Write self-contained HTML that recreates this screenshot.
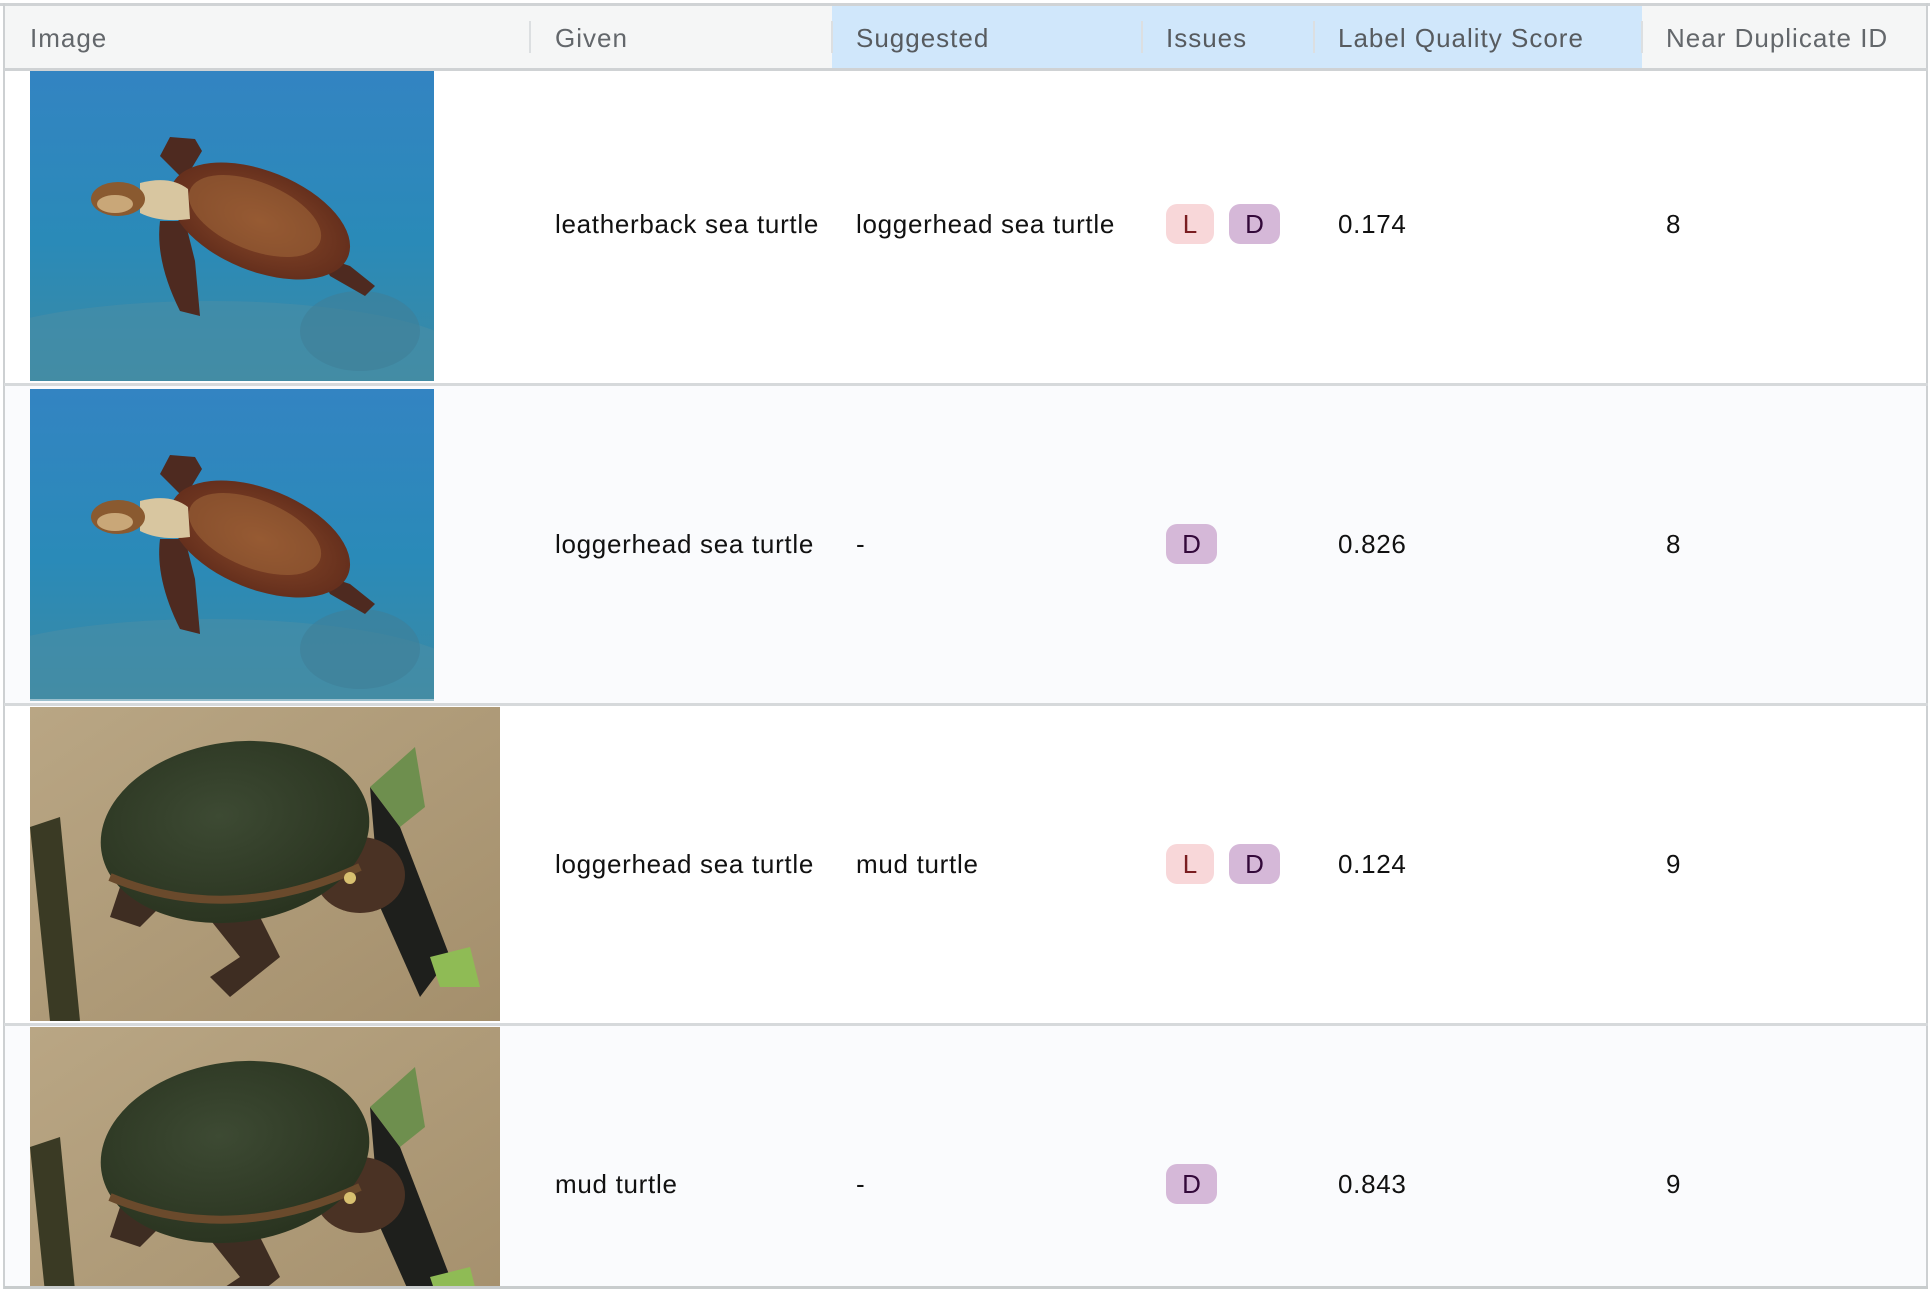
<!DOCTYPE html>
<html><head><meta charset="utf-8"><style>
*{margin:0;padding:0;box-sizing:border-box}
body{width:1930px;height:1292px;background:#fff;position:relative;overflow:hidden;font-family:"Liberation Sans",sans-serif;color:#111}
.a{position:absolute}
.h{position:absolute;top:22px;font-size:26px;color:#63676b;line-height:32px;letter-spacing:1px}
.dv{position:absolute;top:21px;width:2px;height:32px;background:#dcdfe1}
.t{position:absolute;font-size:26px;line-height:32px;color:#111;letter-spacing:0.7px}
.b{position:absolute;width:48px;height:40px;border-radius:11px;font-size:26px;line-height:40px;text-align:center}
.L{background:#f8d7d9;color:#7a1e22}
.D{background:#d5b8d8;color:#33093a;width:51px}
.hr{position:absolute;left:4px;width:1924px;height:3px;background:#d6d9db}
</style></head><body>
<svg width="0" height="0" style="position:absolute">
<defs>
<linearGradient id="sea" x1="0" y1="0" x2="0" y2="1"><stop offset="0" stop-color="#3384c2"/><stop offset="0.55" stop-color="#2a8ab8"/><stop offset="1" stop-color="#3b89a3"/></linearGradient>
<linearGradient id="sand" x1="0" y1="0" x2="1" y2="1"><stop offset="0" stop-color="#b9a684"/><stop offset="1" stop-color="#a48f6c"/></linearGradient>
<radialGradient id="shell" cx="0.45" cy="0.4" r="0.6"><stop offset="0" stop-color="#3d4a33"/><stop offset="1" stop-color="#2a3420"/></radialGradient>
<radialGradient id="tsh" cx="0.5" cy="0.5" r="0.6"><stop offset="0" stop-color="#8a4a2a"/><stop offset="1" stop-color="#5e2a1a"/></radialGradient>
<symbol id="seaT" viewBox="0 0 404 310">
<rect width="404" height="310" fill="url(#sea)"/>
<ellipse cx="180" cy="290" rx="260" ry="60" fill="#4a8ea6" opacity="0.55"/>
<ellipse cx="330" cy="260" rx="60" ry="40" fill="#3f7e98" opacity="0.6"/>
<path d="M150 105 L130 85 L140 66 L165 68 L172 80 L160 100Z" fill="#4e2a20"/>
<path d="M130 150 Q125 190 150 240 L170 245 L165 190 L155 150Z" fill="#4e2a20"/>
<path d="M290 185 L320 195 L345 215 L335 225 L300 205Z" fill="#4e2a20"/>
<ellipse cx="230" cy="150" rx="95" ry="50" transform="rotate(22 230 150)" fill="url(#tsh)"/>
<ellipse cx="225" cy="145" rx="70" ry="34" transform="rotate(22 225 145)" fill="#a0683a" opacity="0.55"/>
<path d="M110 112 Q140 104 158 118 L160 148 Q130 152 110 142Z" fill="#d8c6a0"/>
<ellipse cx="88" cy="128" rx="27" ry="17" fill="#8a5a30"/>
<ellipse cx="85" cy="133" rx="18" ry="9" fill="#c9a778"/>
</symbol>
<symbol id="mudT" viewBox="0 0 470 314">
<rect width="470" height="314" fill="url(#sand)"/>
<path d="M0 120 L20 314 L50 314 L30 110Z" fill="#3a3a24"/>
<path d="M340 80 L370 120 L420 250 L390 290 L350 200Z" fill="#1e1f1c"/>
<path d="M340 80 L385 40 L395 100 L370 120Z" fill="#6e8f4e"/>
<path d="M400 250 L440 240 L450 280 L410 280Z" fill="#8fbb55"/>
<path d="M170 200 L230 210 L250 250 L200 290 L180 270 L210 250Z" fill="#3e2d22"/>
<path d="M90 180 L130 200 L110 220 L80 210Z" fill="#3e2d22"/>
<ellipse cx="330" cy="168" rx="45" ry="38" fill="#4a3224"/>
<ellipse cx="205" cy="125" rx="135" ry="90" transform="rotate(-8 205 125)" fill="url(#shell)"/>
<path d="M80 170 Q200 220 330 160" stroke="#6a4a2c" stroke-width="8" fill="none"/>
<circle cx="320" cy="171" r="6" fill="#d8c070"/>
</symbol>
</defs></svg>

<div class="a" style="left:4px;top:4px;width:1924px;height:66px;background:#f5f6f6"></div>
<div class="a" style="left:832px;top:4px;width:810px;height:66px;background:#d0e7fb"></div>
<div class="a" style="left:0;top:3px;width:1930px;height:3px;background:#d0d3d5"></div>
<div class="a" style="left:3px;top:3px;width:2px;height:1286px;background:#cdd0d2"></div>
<div class="a" style="left:1926px;top:3px;width:2px;height:1286px;background:#cdd0d2"></div>
<div class="hr" style="top:68px;background:#cfd2d4"></div>
<div class="h" style="left:30px">Image</div>
<div class="dv" style="left:529px"></div>
<div class="h" style="left:555px">Given</div>
<div class="dv" style="left:831px"></div>
<div class="h" style="left:856px;color:#575b5f">Suggested</div>
<div class="dv" style="left:1141px"></div>
<div class="h" style="left:1166px;color:#575b5f">Issues</div>
<div class="dv" style="left:1313px"></div>
<div class="h" style="left:1338px;color:#575b5f">Label Quality Score</div>
<div class="dv" style="left:1641px"></div>
<div class="h" style="left:1666px">Near Duplicate ID</div>

<div class="a" style="left:5px;top:386px;width:1921px;height:318px;background:#fafbfd"></div>
<div class="a" style="left:5px;top:1026px;width:1921px;height:261px;background:#fafbfd"></div>
<div class="hr" style="top:383px"></div>
<div class="hr" style="top:703px"></div>
<div class="hr" style="top:1023px"></div>
<div class="hr" style="top:1286px;background:#c8cccd"></div>

<svg class="a" style="left:30px;top:71px" width="404" height="310"><use href="#seaT"/></svg>
<svg class="a" style="left:30px;top:387px" width="404" height="314"><use href="#seaT"/></svg>
<svg class="a" style="left:30px;top:707px" width="470" height="314"><use href="#mudT"/></svg>
<svg class="a" style="left:30px;top:1027px;overflow:hidden" width="470" height="259"><svg width="470" height="314"><use href="#mudT"/></svg></svg>

<div class="t" style="left:555px;top:208px">leatherback sea turtle</div>
<div class="t" style="left:856px;top:208px">loggerhead sea turtle</div>
<div class="b L" style="left:1166px;top:204px">L</div>
<div class="b D" style="left:1229px;top:204px">D</div>
<div class="t" style="left:1338px;top:208px">0.174</div>
<div class="t" style="left:1666px;top:208px">8</div>

<div class="t" style="left:555px;top:528px">loggerhead sea turtle</div>
<div class="t" style="left:856px;top:528px">-</div>
<div class="b D" style="left:1166px;top:524px">D</div>
<div class="t" style="left:1338px;top:528px">0.826</div>
<div class="t" style="left:1666px;top:528px">8</div>

<div class="t" style="left:555px;top:848px">loggerhead sea turtle</div>
<div class="t" style="left:856px;top:848px">mud turtle</div>
<div class="b L" style="left:1166px;top:844px">L</div>
<div class="b D" style="left:1229px;top:844px">D</div>
<div class="t" style="left:1338px;top:848px">0.124</div>
<div class="t" style="left:1666px;top:848px">9</div>

<div class="t" style="left:555px;top:1168px">mud turtle</div>
<div class="t" style="left:856px;top:1168px">-</div>
<div class="b D" style="left:1166px;top:1164px">D</div>
<div class="t" style="left:1338px;top:1168px">0.843</div>
<div class="t" style="left:1666px;top:1168px">9</div>
</body></html>
